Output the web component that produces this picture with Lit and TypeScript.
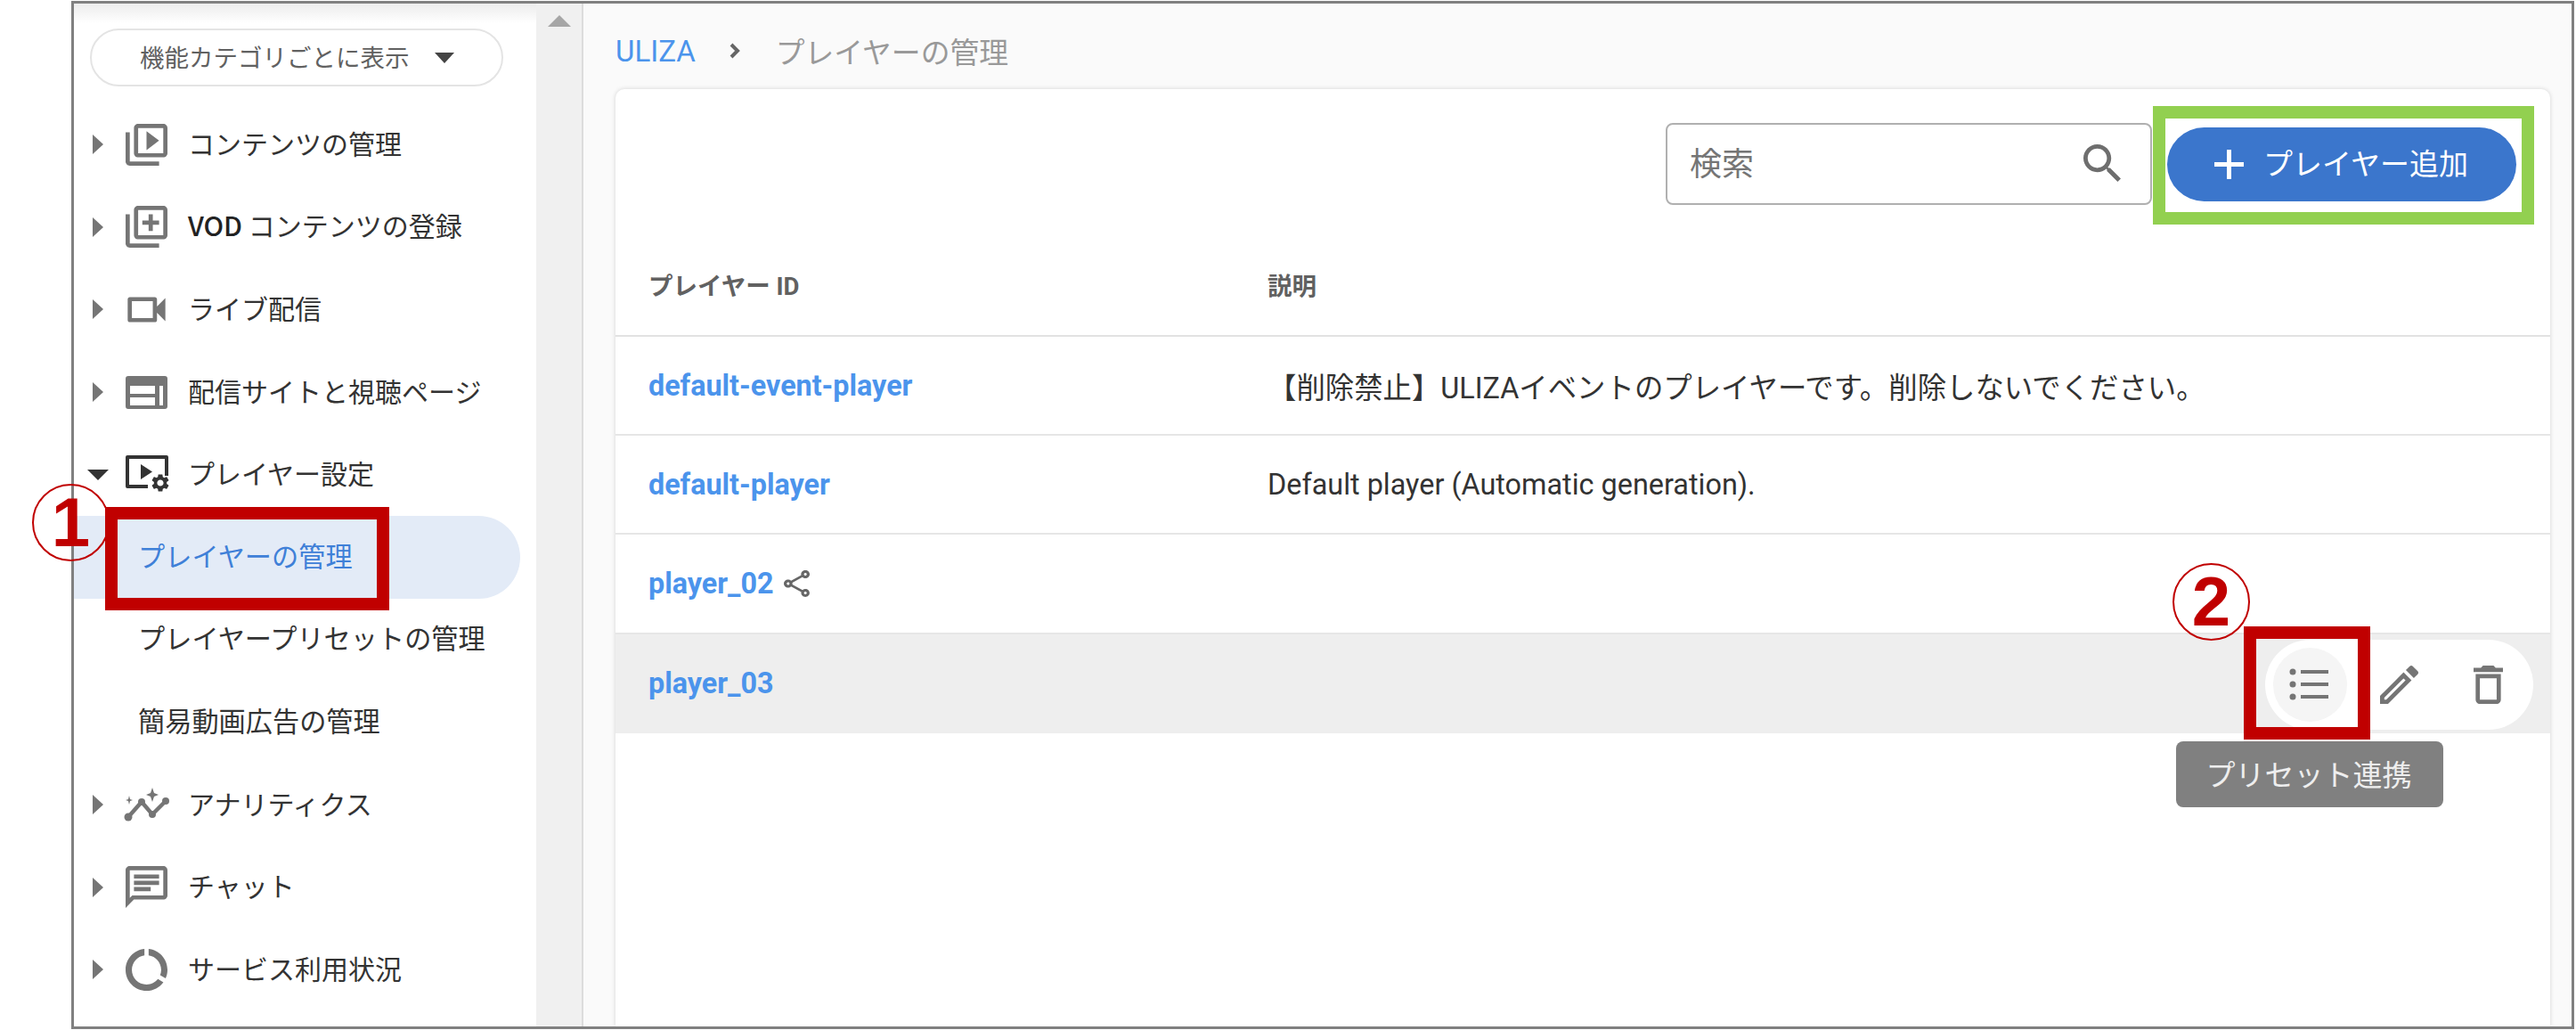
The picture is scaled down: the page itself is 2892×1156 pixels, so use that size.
import { LitElement, html, css, svg } from "lit";
import { customElement } from "lit/decorators.js";

const ICON_LIB = "M4 6H2v14c0 1.1.9 2 2 2h14v-2H4V6zm16-4H8c-1.1 0-2 .9-2 2v12c0 1.1.9 2 2 2h12c1.1 0 2-.9 2-2V4c0-1.1-.9-2-2-2zm0 14H8V4h12v12z";
const GEAR = "M19.14 12.94c.04-.3.06-.61.06-.94 0-.32-.02-.64-.07-.94l2.03-1.58c.18-.14.23-.41.12-.61l-1.92-3.32c-.12-.22-.37-.29-.59-.22l-2.39.96c-.5-.38-1.03-.7-1.62-.94l-.36-2.54c-.04-.24-.24-.41-.48-.41h-3.84c-.24 0-.43.17-.47.41l-.36 2.54c-.59.24-1.13.57-1.62.94l-2.39-.96c-.22-.08-.47 0-.59.22L2.74 8.87c-.12.21-.08.47.12.61l2.03 1.58c-.05.3-.09.63-.09.94s.02.64.07.94l-2.03 1.58c-.18.14-.23.41-.12.61l1.92 3.32c.12.22.37.29.59.22l2.39-.96c.5.38 1.03.7 1.62.94l.36 2.54c.05.24.24.41.48.41h3.84c.24 0 .44-.17.47-.41l.36-2.54c.59-.24 1.13-.56 1.62-.94l2.39.96c.22.08.47 0 .59-.22l1.92-3.32c.12-.22.07-.47-.12-.61l-2.01-1.58zM12 15.6c-1.98 0-3.6-1.62-3.6-3.6s1.62-3.6 3.6-3.6 3.6 1.62 3.6 3.6-1.62 3.6-3.6 3.6z";

const icons: Record<string, unknown> = {
  library: html`<svg class="ic" viewBox="2 2 20 20"><path d="${ICON_LIB}M12 5.5v9l6-4.5z"/></svg>`,
  add: html`<svg class="ic" viewBox="2 2 20 20"><path d="${ICON_LIB}m-7-2h2v-3h3V9h-3V6h-2v3h-3v2h3z"/></svg>`,
  cam: html`<svg class="ic" viewBox="2 2 20 20"><path d="M15 8v8H5V8h10m1-2H4c-.55 0-1 .45-1 1v10c0 .55.45 1 1 1h12c.55 0 1-.45 1-1v-3.5l4 4v-11l-4 4V7c0-.55-.45-1-1-1z"/></svg>`,
  web: html`<svg class="ic" viewBox="0 -5 47 47"><path fill-rule="evenodd" d="M3 0h41a3 3 0 0 1 3 3v31a3 3 0 0 1-3 3H3a3 3 0 0 1-3-3V3a3 3 0 0 1 3-3zM5 11v9h28v-9zM5 24v9h28v-9zM38 11v22h4V11z"/></svg>`,
  player: html`<svg class="ic dark" viewBox="-2 -2 51 47">
    <path d="M2 0h44a2 2 0 0 1 2 2v21h-4V4H4v29h21v4H2a2 2 0 0 1-2-2V2a2 2 0 0 1 2-2z"/>
    <path d="M17 10v17l13-8.500z"/>
    <svg x="27" y="19" width="24" height="24" viewBox="0 0 24 24"><path d="${GEAR}"/></svg></svg>`,
  graph: html`<svg class="ic wide" viewBox="0 0 51 39">
    <path d="M5 33L20 16l12 14 15-15" fill="none" stroke="#757575" stroke-width="4.500"/>
    <circle cx="5" cy="33" r="4.500"/><circle cx="20" cy="16" r="4"/><circle cx="32" cy="30" r="4"/><circle cx="47" cy="15" r="4"/>
    <path d="M32 0l2 6 5 2-5 2-2 6-2-6-5-2 5-2zM6 9l1 4 3 1-3 1-1 4-1-4-3-1 3-1z"/></svg>`,
  chat: html`<svg class="ic" viewBox="2 2 20 20"><path d="M20 2H4c-1.100 0-2 .9-2 2v18l4-4h14c1.100 0 2-.9 2-2V4c0-1.100-.9-2-2-2zm0 14H5.170L4 17.170V4h16v12zM6 12h8v2H6zm0-3h12v2H6zm0-3h12v2H6z"/></svg>`,
  usage: html`<svg class="ic" viewBox="2 2 20 20"><path d="M13 2.050v3.030c3.390.49 6 3.390 6 6.920 0 .9-.18 1.750-.48 2.540l2.600 1.530c.56-1.240.88-2.620.88-4.070 0-5.180-3.950-9.450-9-9.950zM12 19c-3.870 0-7-3.130-7-7 0-3.530 2.610-6.430 6-6.920V2.050c-5.060.5-9 4.760-9 9.950 0 5.520 4.470 10 9.990 10 3.310 0 6.240-1.610 8.060-4.090l-2.600-1.530C16.170 17.980 14.210 19 12 19z"/></svg>`,
};

type Nav = { label: string; strong?: string; icon?: string; open?: boolean; sub?: boolean; active?: boolean };
const NAV: Nav[] = [
  { label: "コンテンツの管理", icon: "library" },
  { strong: "VOD", label: " コンテンツの登録", icon: "add" },
  { label: "ライブ配信", icon: "cam" },
  { label: "配信サイトと視聴ページ", icon: "web" },
  { label: "プレイヤー設定", icon: "player", open: true },
  { label: "プレイヤーの管理", sub: true, active: true },
  { label: "プレイヤープリセットの管理", sub: true },
  { label: "簡易動画広告の管理", sub: true },
  { label: "アナリティクス", icon: "graph" },
  { label: "チャット", icon: "chat" },
  { label: "サービス利用状況", icon: "usage" },
];

const ROWS = [
  { id: "default-event-player", desc: "【削除禁止】ULIZAイベントのプレイヤーです。削除しないでください。" },
  { id: "default-player", desc: "Default player (Automatic generation)." },
  { id: "player_02", desc: "", shared: true },
  { id: "player_03", desc: "", hover: true },
];

@customElement("app-root")
export class AppRoot extends LitElement {
  static styles = css`
    :host { display: block; position: relative; width: 2892px; height: 1156px; overflow: hidden; background: #fff;
      font-family: Roboto, "Noto Sans CJK JP", sans-serif; color: #333; }
    * { box-sizing: border-box; }
    .frame { position: absolute; left: 80px; top: 1px; width: 2810px; height: 1154px; border: 3px solid #808080; display: flex; overflow: hidden; }
    .side { width: 519px; flex: none; background: linear-gradient(#ececec 0, #fff 22px); overflow: hidden; }
    .drop { margin: 28px 0 0 18px; width: 464px; height: 65px; border: 2px solid #e4e4e4; border-radius: 33px; background: #fff;
      display: flex; align-items: center; padding-left: 54px; font-size: 27.500px; color: #616161; font-family: "Noto Sans CJK JP", sans-serif; }
    .drop .lbl { padding-bottom: 3px; }
    .caret { width: 0; height: 0; margin-left: 28px; border: 11.500px solid transparent; border-top: 12px solid #444; border-bottom: 0; }
    .nav { margin-top: 19px; }
    .row { height: 92.600px; display: flex; align-items: center; padding-left: 15px; font-size: 30px; color: #333; white-space: pre; font-family: "Noto Sans CJK JP", sans-serif; }
    .lbl { padding-bottom: 5px; }
    .lbl b { font-weight: 500; color: #222; }
    .row.sub { padding-left: 72px; font-size: 30.200px; }
    .row.active { width: 501px; background: #e3ebf7; border-radius: 0 47px 47px 0; color: #3f80d8; }
    .arrow { width: 24px; flex: none; display: flex; justify-content: center; }
    .arrow i { display: block; width: 0; height: 0; border-left: 12px solid #757575; border-top: 11px solid transparent; border-bottom: 11px solid transparent; }
    .arrow i.down { border-top: 12px solid #333; border-left: 12px solid transparent; border-right: 12px solid transparent; border-bottom: 0; }
    .iconbox { width: 51px; height: 47px; margin-left: 17px; margin-right: 21px; display: flex; align-items: center; justify-content: center; flex: none; }
    .ic { width: 47px; height: 47px; fill: #757575; display: block; }
    .ic.dark { width: 51px; fill: #333; }
    .ic.wide { width: 51px; height: 39px; }
    .track { width: 53px; flex: none; background: #f0f0f0; display: flex; justify-content: center; padding-top: 13px; border-right: 2px solid #dcdcdc; }
    .track i { display: block; width: 0; height: 0; border-left: 13px solid transparent; border-right: 13px solid transparent; border-bottom: 13px solid #a6a6a6; }
    .main { flex: 1; min-width: 0; background: #fafafa; padding: 0 24px 0 36px; display: flex; flex-direction: column; }
    .crumb { height: 96px; flex: none; display: flex; align-items: center; padding-top: 10px; }
    .crumb a { color: #4b94ec; font-family: Roboto, sans-serif; font-size: 33px; }
    .crumb svg { width: 13px; height: 20px; margin: 0 39px 0 38px; fill: none; stroke: #666; stroke-width: 4; }
    .crumb span { color: #999; font-size: 32.800px; padding-bottom: 2px; font-family: "Noto Sans CJK JP", sans-serif; }
    .card { flex: 1; background: #fff; border-radius: 10px 10px 0 0; box-shadow: 0 0 5px rgba(0,0,0,.16); }
    .tools { height: 168px; display: flex; justify-content: flex-end; align-items: flex-start; padding: 38px 38px 0 0; gap: 17px; }
    .search { width: 546px; height: 92px; border: 2px solid #b0b0b0; border-radius: 8px; display: flex; align-items: center; justify-content: space-between; padding: 0 33px 0 25px;
      font-size: 36px; color: #757575; font-family: "Noto Sans CJK JP", sans-serif; }
    .search .lbl { padding-bottom: 6px; }
    .search svg { width: 42px; height: 42px; fill: #6e6e6e; margin-bottom: 2px; }
    .add { width: 392px; height: 83px; margin-top: 5px; background: #3b76cc; color: #fff; border-radius: 42px; display: flex; align-items: center; padding-left: 53px; gap: 22px;
      font-size: 33px; font-family: "Noto Sans CJK JP", sans-serif; }
    .add svg { width: 33px; height: 33px; stroke: #fff; stroke-width: 5; }
    .add .lbl { padding-bottom: 6px; }
    .grid { display: grid; grid-template-columns: 695px 1fr; align-items: center; padding-left: 37px; }
    .head { height: 110px; border-bottom: 2px solid #e2e2e2; font-size: 27.500px; font-weight: 700; color: #616161; font-family: Roboto, "Noto Sans CJK JP", sans-serif; }
    .head .lbl { padding-bottom: 6px; display: block; }
    .line { height: 111.200px; border-bottom: 2px solid #e6e6e6; font-size: 32.400px; color: #333; position: relative; }
    .line.hover { background: #eee; border-bottom: 0; }
    .id { color: #4b94ec; font-weight: 700; display: flex; align-items: center; gap: 11px; font-size: 32.300px; }
    .id svg { width: 29px; height: 30px; fill: #666; }
    .actions { position: absolute; right: 19px; top: 6px; width: 301px; height: 101px; background: #fff; border-radius: 51px; display: flex; align-items: center; padding-left: 9px; }
    .actions .on { width: 83px; height: 83px; border-radius: 50%; background: #f5f5f5; display: flex; align-items: center; justify-content: center; padding-right: 4px; }
    .actions .on svg { width: 44px; height: 36px; }
    .edit { width: 43px; height: 43px; margin-left: 37px; fill: #757575; }
    .del { width: 33px; height: 43px; margin-left: 62px; fill: #757575; }
    .tip { position: absolute; left: 2443px; top: 832px; width: 300px; height: 74px; background: #808080; border-radius: 8px; color: #eee; font-size: 33px;
      display: flex; align-items: center; justify-content: center; padding-right: 2px; font-family: "Noto Sans CJK JP", sans-serif; }
    .tip .lbl { padding-bottom: 3px; }
    .mark { position: absolute; border: 14px solid #c00000; }
    .mark.one { left: 118px; top: 569px; width: 319px; height: 116px; }
    .mark.two { left: 2519px; top: 703px; width: 142px; height: 127px; }
    .mark.green { left: 2417px; top: 119px; width: 428px; height: 133px; border-color: #92d050; }
    .num { position: absolute; width: 87px; height: 87px; border: 2px solid #c00000; border-radius: 50%; color: #c00000; font-weight: 700;
      font-family: "Liberation Sans", sans-serif; font-size: 78px; line-height: 83px; text-align: center; }
    .num.a { left: 36px; top: 543px; }
    .num.b { left: 2439px; top: 632px; }
  `;

  private renderNav(n: Nav) {
    const cls = `row ${n.sub ? "sub" : ""} ${n.active ? "active" : ""}`;
    if (n.sub) return html`<div class=${cls}><span class="lbl">${n.label}</span></div>`;
    return html`<div class=${cls}>
      <span class="arrow"><i class=${n.open ? "down" : ""}></i></span>
      <span class="iconbox">${icons[n.icon!]}</span>
      <span class="lbl">${n.strong ? html`<b>${n.strong}</b>` : ""}${n.label}</span>
    </div>`;
  }

  render() {
    return html`
      <div class="frame">
        <aside class="side">
          <div class="drop"><span class="lbl">機能カテゴリごとに表示</span><i class="caret"></i></div>
          <div class="nav">${NAV.map((n) => this.renderNav(n))}</div>
        </aside>
        <div class="track"><i></i></div>
        <main class="main">
          <div class="crumb">
            <a>ULIZA</a>
            <svg viewBox="0 0 13 20"><path d="M2 3l7 7-7 7"/></svg>
            <span>プレイヤーの管理</span>
          </div>
          <section class="card">
            <div class="tools">
              <div class="search"><span class="lbl">検索</span><svg viewBox="3 3 17.500 17.500"><path d="M15.500 14h-.79l-.28-.27C15.410 12.590 16 11.110 16 9.500 16 5.910 13.090 3 9.500 3S3 5.910 3 9.500 5.910 16 9.500 16c1.610 0 3.090-.59 4.230-1.570l.27.28v.79l5 4.990L20.490 19l-4.990-5zm-6 0C7.010 14 5 11.990 5 9.500S7.010 5 9.500 5 14 7.010 14 9.500 11.990 14 9.500 14z"/></svg></div>
              <div class="add"><svg viewBox="0 0 33 33"><path d="M16.500 0v33M0 16.500h33"/></svg><span class="lbl">プレイヤー追加</span></div>
            </div>
            <div class="grid head"><span class="lbl">プレイヤー ID</span><span class="lbl">説明</span></div>
            ${ROWS.map((r) => html`
              <div class="grid line ${r.hover ? "hover" : ""}">
                <div class="id">${r.id}${r.shared ? html`<svg viewBox="3 2 18 20" preserveAspectRatio="none"><path d="M18 16.080c-.76 0-1.440.3-1.960.77L8.910 12.700c.05-.23.09-.46.09-.7s-.04-.47-.09-.7l7.050-4.110c.54.5 1.250.81 2.040.81 1.660 0 3-1.340 3-3s-1.340-3-3-3-3 1.340-3 3c0 .24.04.47.09.7L8.040 9.810C7.500 9.310 6.790 9 6 9c-1.660 0-3 1.340-3 3s1.340 3 3 3c.79 0 1.500-.31 2.040-.81l7.120 4.160c-.05.21-.08.43-.08.65 0 1.610 1.310 2.920 2.920 2.920s2.920-1.310 2.920-2.920c0-1.610-1.310-2.920-2.920-2.920zM18 4c.55 0 1 .45 1 1s-.45 1-1 1-1-.45-1-1 .45-1 1-1zM6 13c-.55 0-1-.45-1-1s.45-1 1-1 1 .45 1 1-.45 1-1 1zm12 7.020c-.55 0-1-.45-1-1s.45-1 1-1 1 .45 1 1-.45 1-1 1z"/></svg>` : ""}</div>
                <div>${r.desc}</div>
                ${r.hover ? html`<div class="actions">
                  <div class="on"><svg viewBox="0 0 44 36" fill="#757575">${svg`<circle cx="4" cy="4" r="3.500"/><circle cx="4" cy="18" r="3.500"/><circle cx="4" cy="32" r="3.500"/><rect x="13" y="2" width="31" height="4"/><rect x="13" y="16" width="31" height="4"/><rect x="13" y="30" width="31" height="4"/>`}</svg></div>
                  <svg class="edit" viewBox="3 3 18 18"><path d="M3 17.250V21h3.750L17.810 9.940l-3.750-3.750L3 17.250zM5.920 19H5v-.92l9.060-9.060.92.92L5.920 19zM20.710 5.630l-2.340-2.340c-.2-.2-.45-.29-.71-.29s-.51.1-.7.29l-1.830 1.830 3.750 3.750 1.830-1.830c.39-.39.39-1.020 0-1.410z"/></svg>
                  <svg class="del" viewBox="5 3 14 18" preserveAspectRatio="none"><path d="M16 9v10H8V9h8m-1.500-6h-5l-1 1H5v2h14V4h-3.500l-1-1zM18 7H6v12c0 1.100.9 2 2 2h8c1.100 0 2-.9 2-2V7z"/></svg>
                </div>` : ""}
              </div>`)}
          </section>
        </main>
      </div>
      <div class="tip"><span class="lbl">プリセット連携</span></div>
      <div class="mark one"></div>
      <div class="mark two"></div>
      <div class="mark green"></div>
      <div class="num a">1</div>
      <div class="num b">2</div>
    `;
  }
}
